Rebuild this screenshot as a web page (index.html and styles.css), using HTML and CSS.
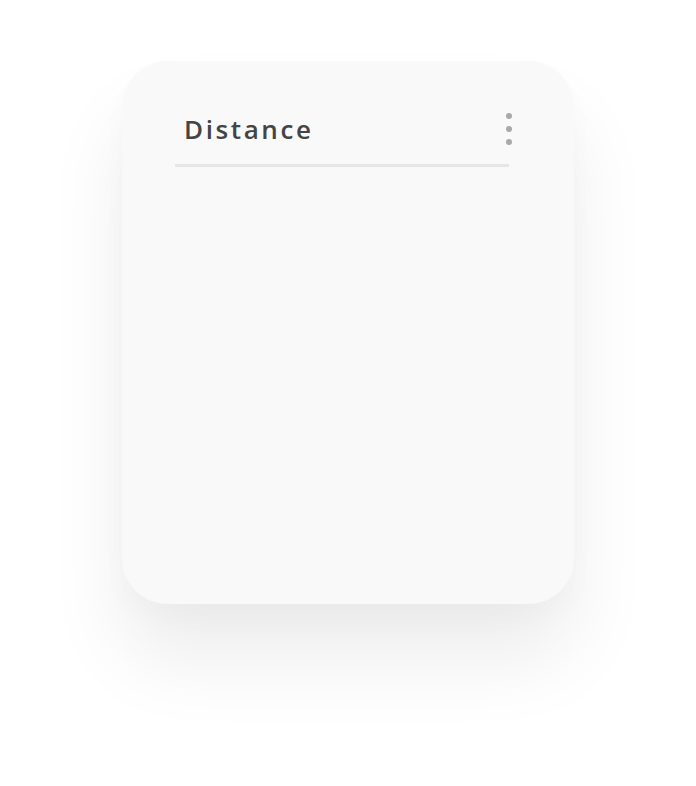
FILE: index.html
```html
<!DOCTYPE html>
<html>
<head>
<meta charset="utf-8">
<link rel="stylesheet" href="styles.css">
</head>
<body>
<div class="page">
  <div class="card">
    <div class="header">
      <h2 class="title">Distance</h2>
      <button class="menu" aria-label="More">
        <span class="dot"></span><span class="dot"></span><span class="dot"></span>
      </button>
    </div>
    <div class="divider"></div>
  </div>
</div>
</body>
</html>
```
FILE: styles.css
```css
html, body {
  margin: 0;
  padding: 0;
  background: #ffffff;
}
.page {
  box-sizing: border-box;
  min-height: 786px;
  padding: 61px 0 0 122px;
}
.card {
  width: 452px;
  height: 543px;
  box-sizing: border-box;
  background: #f9f9f9;
  border-radius: 46px;
  box-shadow: 0 55px 80px rgba(0, 0, 0, 0.075), 0 15px 30px rgba(0, 0, 0, 0.02);
  padding: 48px 65px 0 53px;
}
.header {
  display: flex;
  align-items: center;
  justify-content: space-between;
  height: 40px;
  padding-left: 9px;
}
.title {
  margin: 0;
  font-family: "Open Sans", "DejaVu Sans", sans-serif;
  font-weight: 600;
  font-size: 26px;
  letter-spacing: 2.6px;
  color: #444444;
  line-height: 40px;
}
.menu {
  display: flex;
  flex-direction: column;
  gap: 7px;
  border: 0;
  background: none;
  padding: 0;
  margin-right: -3px;
}
.dot {
  width: 6px;
  height: 6px;
  border-radius: 50%;
  background: #a9a9a9;
}
.divider {
  margin-top: 15px;
  height: 3px;
  background: #e6e6e6;
}
```
